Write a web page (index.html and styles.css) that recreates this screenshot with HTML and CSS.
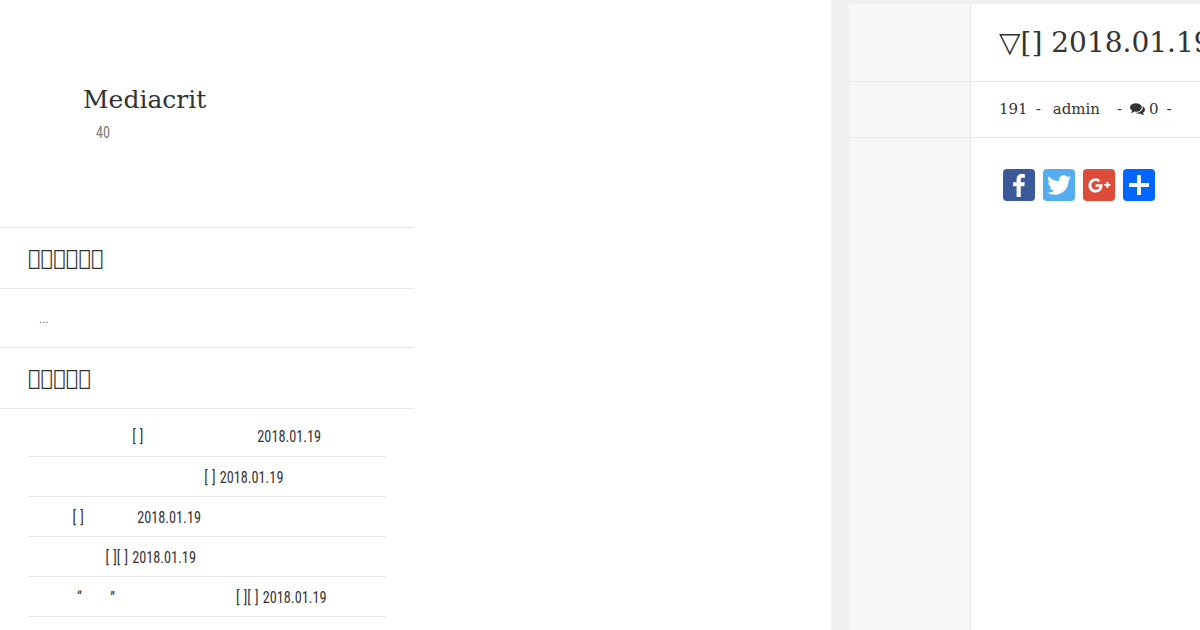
FILE: index.html
```html
<!DOCTYPE html>
<html lang="en">
<head>
<meta charset="utf-8">
<title>Mediacrit</title>
<link rel="stylesheet" href="styles.css">
</head>
<body>
<div class="page">
  <main class="main">
    <aside class="sidebar">
      <header class="brand">
        <h1 class="brand-name">Mediacrit</h1>
        <p class="brand-sub"><span class="narrow">40</span></p>
      </header>
      <section class="widget">
        <h2 class="widget-title">&#xE000;&#xE000;&#xE000;&#xE000;&#xE000;&#xE000;</h2>
        <div class="excerpt">...</div>
      </section>
      <section class="widget">
        <h2 class="widget-title">&#xE000;&#xE000;&#xE000;&#xE000;&#xE000;</h2>
        <ul class="posts">
          <li class="post"><span class="narrow"><span class="gap g1a"></span>[ ]<span class="gap g1b"></span>2018.01.19</span></li>
          <li class="post"><span class="narrow"><span class="gap g2a"></span>[ ] 2018.01.19</span></li>
          <li class="post"><span class="narrow"><span class="gap g3a"></span>[ ]<span class="gap g3b"></span>2018.01.19</span></li>
          <li class="post"><span class="narrow"><span class="gap g4a"></span>[ ][ ] 2018.01.19</span></li>
          <li class="post"><span class="narrow"><span class="gap g5a"></span>“<span class="gap g5b"></span>”<span class="gap g5c"></span>[ ][ ] 2018.01.19</span></li>
        </ul>
      </section>
    </aside>
  </main>
  <div class="gutter"></div>
  <article class="content">
    <div class="row row-title">
      <div class="rail"></div>
      <h2 class="post-title">▽[] 2018.01.19</h2>
    </div>
    <div class="row row-meta">
      <div class="rail"></div>
      <div class="meta">
        <span>191</span><span class="sep">-</span><span>admin</span><span class="sep wide">-</span>
        <svg class="comment" viewBox="0 0 1792 1792"><path fill="#333" d="M1408 768q0 139-94 257t-256.500 186.500-353.500 68.500q-86 0-176-16-124 88-278 128-36 9-86 16h-3q-11 0-20.500-8t-11.500-21q-1-3-1-6.500t.500-6.500 2-6l2.500-5 3.500-5.500 4-5 4.500-5 4-4.500q5-6 23-25t26-29.500 22.500-29 25-38.500 20.500-44q-124-72-195-177t-71-224q0-139 94-257t256.500-186.500 353.500-68.500 353.500 68.500 256.500 186.500 94 257zM1792 1024q0 120-71 224.500t-195 176.500q10 24 20.500 44t25 38.500 22.500 29 26 29.500 23 25q1 1 4 4.500t4.500 5 4 5 3.500 5.500l2.500 5 2 6 .500 6.500-1 6.500q-3 14-13 22t-22 7q-50-7-86-16-154-40-278-128-90 16-176 16-271 0-472-132 58 4 88 4 161 0 309-45t264-129q125-92 192-212t67-254q0-77-23-152 129 71 204 178t75 230z"/></svg>
        <span class="count">0</span><span class="sep">-</span>
      </div>
    </div>
    <div class="row row-body">
      <div class="rail"></div>
      <div class="share">
        <a class="btn fb"><svg viewBox="0 0 32 32"><path fill="#fff" d="M17.800 28V17.300h3.500l.5-4h-4v-2.500c0-1.200.3-2 2-2h2.100V5.200c-.4-.1-1.700-.2-3.100-.2-3.100 0-5.200 1.900-5.200 5.300v3h-3.500v4h3.500V28z"/></svg></a>
        <a class="btn tw"><svg viewBox="0 0 32 32"><path fill="#fff" d="M28 8.600c-.9.400-1.800.7-2.800.8 1-.6 1.800-1.600 2.200-2.700-1 .6-2 1-3.100 1.200-.9-1-2.200-1.600-3.600-1.600-2.700 0-4.900 2.200-4.900 4.900 0 .4 0 .8.100 1.100-4.100-.2-7.700-2.200-10.100-5.100-.4.700-.7 1.600-.7 2.500 0 1.700.9 3.200 2.200 4.100-.8 0-1.600-.2-2.200-.6v.1c0 2.400 1.700 4.400 3.900 4.800-.4.100-.8.200-1.300.2-.3 0-.6 0-.9-.1.600 2 2.400 3.400 4.600 3.400-1.700 1.300-3.800 2.100-6.100 2.100-.4 0-.8 0-1.200-.1 2.200 1.400 4.800 2.200 7.500 2.200 9.100 0 14-7.500 14-14v-.6c1-.7 1.800-1.600 2.400-2.500z"/></svg></a>
        <a class="btn gp"><svg viewBox="0 0 32 32"><path fill="#fff" d="M12.600 15.200v2.500h3.900c-.2 1.100-1.300 3-3.900 3-2.300 0-4.200-1.900-4.200-4.300s1.900-4.300 4.200-4.300c1.300 0 2.200.6 2.700 1.100l2-2c-1.300-1.200-3-2-4.700-2-4 0-7.200 3.200-7.200 7.200s3.200 7.200 7.200 7.200c4.200 0 6.900-2.900 6.900-7 0-.5 0-.9-.1-1.400zM27.400 15h-2v-2h-2v2h-2v2h2v2h2v-2h2z"/></svg></a>
        <a class="btn add"><svg viewBox="0 0 32 32"><path fill="#fff" d="M14 6h4v8h8v4h-8v8h-4v-8H6v-4h8z"/></svg></a>
      </div>
    </div>
  </article>
</div>
</body>
</html>
```
FILE: styles.css
```css
* { box-sizing: border-box; }
html, body { margin: 0; padding: 0; height: 630px; overflow: hidden; background: #fff; }
body { color: #333; font-family: "DejaVu Serif", serif; }
.page { display: flex; width: 1200px; height: 630px; overflow: hidden; }

.main { width: 831px; flex: none; background: #fff; }
.sidebar { width: 413.5px; }
.brand { height: 228px; padding: 84px 0 0 83px; border-bottom: 1px solid #e8e8e8; }
.brand-name { margin: 0; font-size: 25px; line-height: 32px; font-weight: 400; color: #333; }
.brand-sub { margin: 8px 0 0 13px; font: 400 16px/18px "Roboto", sans-serif; font-stretch: 75%; color: #777; }

.narrow { display: inline-block; transform: scaleX(.89); transform-origin: 0 50%; white-space: nowrap; word-spacing: 1px; }

.widget-title { margin: 0; height: 61px; padding: 0 28px; border-bottom: 1px solid #e8e8e8; font-size: 21px; line-height: 60px; font-weight: 400; color: #333; }
.excerpt { height: 59px; padding: 20px 0 0 39px; border-bottom: 1px solid #e8e8e8; font: 400 12px/20px "Roboto", sans-serif; font-stretch: 75%; color: #777; }

.posts { list-style: none; margin: 0; padding: 8px 28px 0; }
.post { height: 40px; border-bottom: 1px solid #e8e8e8; font: 400 16px/42px "Roboto", sans-serif; font-stretch: 75%; color: #333; white-space: nowrap; }
.post:first-child { line-height: 40px; }
.gap { display: inline-block; height: 1px; }
.g1a { width: 117px; } .g1b { width: 128px; }
.g2a { width: 198px; }
.g3a { width: 50px; } .g3b { width: 60px; }
.g4a { width: 87px; }
.g5a { width: 55px; } .g5b { width: 32px; } .g5c { width: 136px; }

.gutter { width: 18px; flex: none; background: #f0f0f0; }
.content { flex: 1; min-width: 0; padding-top: 4px; background: #f0f0f0; display: flex; flex-direction: column; }
.row { display: flex; background: #fff; }
.rail { width: 122px; flex: none; background: #f7f7f7; border-right: 1px solid #e8e8e8; }
.row-title { height: 78px; border-bottom: 1px solid #e8e8e8; }
.row-meta { height: 56px; border-bottom: 1px solid #e8e8e8; }
.row-body { flex: 1; }

.post-title { margin: 0; padding-left: 28px; font-size: 28px; line-height: 78px; font-weight: 400; white-space: nowrap; color: #333; }
.meta { display: flex; align-items: center; padding: 0 0 2px 28px; font-size: 15px; color: #333; white-space: pre; }
.sep { margin: 0 12px 0 8px; }
.sep.wide { margin: 0 8px 0 17px; }
.comment { width: 15px; height: 15px; }
.count { margin-left: 4px; }
.count + .sep { margin-left: 8px; }

.share { display: flex; gap: 8px; padding: 31px 0 0 32px; }
.btn { display: block; width: 32px; height: 32px; border-radius: 4px; }
.btn svg { display: block; width: 32px; height: 32px; }
.fb { background: #3b5998; }
.tw { background: #55acee; }
.gp { background: #dd4b39; }
.add { background: #0166ff; }
```
